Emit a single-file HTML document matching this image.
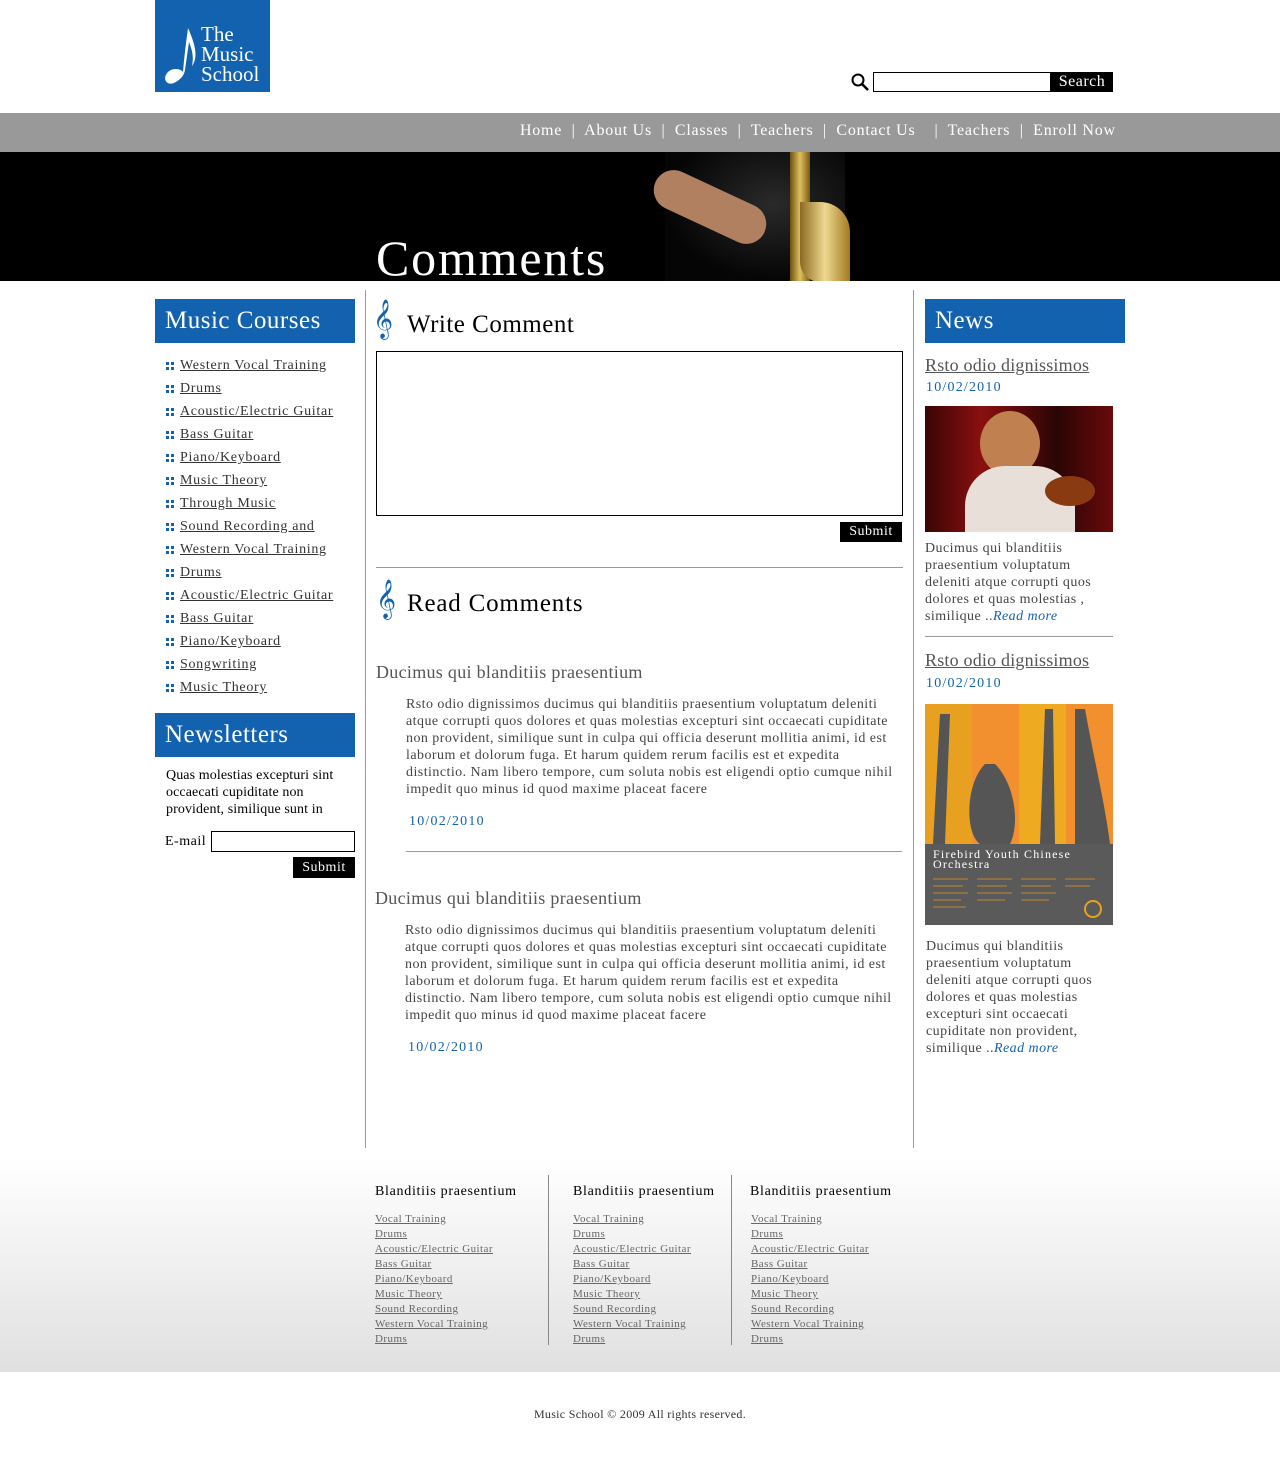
<!DOCTYPE html>
<html><head><meta charset="utf-8"><style>
*{margin:0;padding:0;box-sizing:border-box}
body{width:1280px;height:1458px;position:relative;background:#fff;font-family:"Liberation Serif",serif;color:#333;overflow:hidden;letter-spacing:.5px}
.a{position:absolute}
a{color:#333;text-decoration:underline}
.blue{background:#1362b0;color:#fff}
.hd{font-size:25px;padding-left:10px;line-height:44px;height:44px;width:200px}
ul.c{list-style:none}
ul.c li{font-size:14px;height:23px;line-height:20px;padding-left:25px;position:relative;letter-spacing:.7px}
ul.c li:before{content:"";position:absolute;left:11px;top:6px;width:8px;height:8px;background:
linear-gradient(#fff,#fff) 3px 0/2px 8px no-repeat,linear-gradient(#fff,#fff) 0 3px/8px 2px no-repeat,#1362b0}
.p{font-size:14px;line-height:17px;color:#444;letter-spacing:.45px}
.date{color:#1362b0;font-size:14px;letter-spacing:1.2px}
.btn{background:#000;color:#fff;font-size:14px;text-align:center}
.fl a{display:block;font-size:11px;line-height:15px;color:#666;letter-spacing:.45px}
</style></head><body>
<div class="a blue" style="left:155px;top:0;width:115px;height:92px">
<svg class="a" style="left:3px;top:28px" width="45" height="60" viewBox="0 0 45 60"><path d="M30 0 C28 15 26 30 25 44 C22 40 14 40 10 44 C4 50 8 58 16 55 C22 52 26 48 27 42 L31 14 C34 22 36 28 34 38 C40 30 38 18 30 0Z" fill="#fff"/></svg>
<div class="a" style="left:46px;top:24px;font-size:21px;line-height:20px;color:#fff;letter-spacing:0">The<br>Music<br>School</div></div>
<svg class="a" style="left:850px;top:72px" width="20" height="20"><circle cx="8" cy="8" r="5.5" fill="none" stroke="#000" stroke-width="2"/><path d="M12 12 L18 18" stroke="#000" stroke-width="2.5"/></svg>
<div class="a" style="left:873px;top:72px;width:178px;height:20px;border:1px solid #000"></div>
<div class="a btn" style="left:1051px;top:72px;width:62px;height:20px;font-size:16px;line-height:20px">Search</div>
<div class="a" style="left:0;top:113px;width:1280px;height:39px;background:#999"></div>
<div class="a" style="left:520px;top:122px;color:#fff;font-size:16px;white-space:pre;letter-spacing:.75px">Home  |  About Us  |  Classes  |  Teachers  |  Contact Us    |  Teachers  |  Enroll Now</div>
<div class="a" style="left:0;top:152px;width:1280px;height:129px;background:#000;overflow:hidden">
<div class="a" style="left:665px;top:0;width:180px;height:129px;background:radial-gradient(ellipse at 60% 40%,#2a2a2a,#050505 70%)"></div>
<div class="a" style="left:650px;top:35px;width:120px;height:40px;background:#b08060;border-radius:20px;transform:rotate(25deg)"></div>
<div class="a" style="left:790px;top:0;width:20px;height:129px;background:linear-gradient(90deg,#6a5010,#e0c060,#7a5a10)"></div>
<div class="a" style="left:800px;top:50px;width:50px;height:80px;border-radius:0 30px 0 20px;background:linear-gradient(90deg,#8a6a20,#f0d890,#a07a20)"></div>
<div class="a" style="left:376px;top:78px;font-size:50px;color:#fff;line-height:56px;letter-spacing:1.8px">Comments</div></div>
<div class="a" style="left:365px;top:290px;width:1px;height:858px;background:#999"></div>
<div class="a" style="left:913px;top:290px;width:1px;height:858px;background:#999"></div>
<div class="a blue hd" style="left:155px;top:299px">Music Courses</div>
<ul class="a c" style="left:155px;top:356px">
<li><a>Western Vocal Training</a></li><li><a>Drums</a></li><li><a>Acoustic/Electric Guitar</a></li><li><a>Bass Guitar</a></li><li><a>Piano/Keyboard</a></li><li><a>Music Theory</a></li><li><a>Through Music</a></li><li><a>Sound Recording and </a></li><li><a>Western Vocal Training</a></li><li><a>Drums</a></li><li><a>Acoustic/Electric Guitar</a></li><li><a>Bass Guitar</a></li><li><a>Piano/Keyboard</a></li><li><a>Songwriting</a></li><li><a>Music Theory</a></li></ul>
<div class="a blue hd" style="left:155px;top:713px">Newsletters</div>
<div class="a" style="left:166px;top:767px;font-size:14px;line-height:17px;color:#000;width:190px;letter-spacing:.1px">Quas molestias excepturi sint occaecati cupiditate non provident, similique sunt in</div>
<div class="a" style="left:165px;top:834px;font-size:14px;color:#000">E-mail</div>
<div class="a" style="left:211px;top:831px;width:144px;height:21px;border:1px solid #000"></div>
<div class="a btn" style="left:293px;top:857px;width:62px;height:21px;line-height:21px">Submit</div>
<div class="a" style="left:373px;top:300px;font-size:34px;color:#1362b0;line-height:40px">𝄞</div>
<div class="a" style="left:407px;top:311px;font-size:25px;color:#000">Write Comment</div>
<div class="a" style="left:376px;top:351px;width:527px;height:165px;border:1px solid #000"></div>
<div class="a btn" style="left:840px;top:522px;width:62px;height:20px;line-height:20px">Submit</div>
<div class="a" style="left:376px;top:567px;width:527px;height:1px;background:#999"></div>
<div class="a" style="left:376px;top:580px;font-size:34px;color:#1362b0;line-height:40px">𝄞</div>
<div class="a" style="left:407px;top:590px;font-size:25px;color:#000;letter-spacing:.8px">Read Comments</div>
<div class="a" style="left:376px;top:662px;font-size:18px;color:#555;letter-spacing:.3px">Ducimus qui blanditiis praesentium</div>
<div class="a p" style="left:406px;top:696px;width:496px">Rsto odio dignissimos ducimus qui blanditiis praesentium voluptatum deleniti atque corrupti quos dolores et quas molestias excepturi sint occaecati cupiditate non provident, similique sunt in culpa qui officia deserunt mollitia animi, id est laborum et dolorum fuga. Et harum quidem rerum facilis est et expedita distinctio. Nam libero tempore, cum soluta nobis est eligendi optio cumque nihil impedit quo minus id quod maxime placeat facere</div>
<div class="a date" style="left:409px;top:814px">10/02/2010</div>
<div class="a" style="left:406px;top:851px;width:496px;height:1px;background:#999"></div>
<div class="a" style="left:375px;top:888px;font-size:18px;color:#555;letter-spacing:.3px">Ducimus qui blanditiis praesentium</div>
<div class="a p" style="left:405px;top:922px;width:496px">Rsto odio dignissimos ducimus qui blanditiis praesentium voluptatum deleniti atque corrupti quos dolores et quas molestias excepturi sint occaecati cupiditate non provident, similique sunt in culpa qui officia deserunt mollitia animi, id est laborum et dolorum fuga. Et harum quidem rerum facilis est et expedita distinctio. Nam libero tempore, cum soluta nobis est eligendi optio cumque nihil impedit quo minus id quod maxime placeat facere</div>
<div class="a date" style="left:408px;top:1040px">10/02/2010</div>
<div class="a blue hd" style="left:925px;top:299px">News</div>
<div class="a" style="left:925px;top:355px;font-size:18px;letter-spacing:.2px"><a style="color:#555">Rsto odio dignissimos</a></div>
<div class="a date" style="left:926px;top:380px">10/02/2010</div>
<div class="a" style="left:925px;top:406px;width:188px;height:126px;background:linear-gradient(90deg,#3a0505,#8a1010 30%,#2a0505 70%,#6a0a0a);overflow:hidden">
<div class="a" style="left:55px;top:5px;width:60px;height:65px;border-radius:50%;background:#c08050"></div>
<div class="a" style="left:40px;top:60px;width:110px;height:70px;border-radius:40px 40px 0 0;background:#e8e0d8"></div>
<div class="a" style="left:120px;top:70px;width:50px;height:30px;border-radius:50%;background:#8a3a10"></div></div>
<div class="a p" style="left:925px;top:540px;width:185px">Ducimus qui blanditiis praesentium voluptatum deleniti atque corrupti quos dolores et quas molestias , similique ..<i style="color:#1362b0">Read more</i></div>
<div class="a" style="left:925px;top:636px;width:188px;height:1px;background:#999"></div>
<div class="a" style="left:925px;top:650px;font-size:18px;letter-spacing:.2px"><a style="color:#555">Rsto odio dignissimos</a></div>
<div class="a date" style="left:926px;top:676px">10/02/2010</div>
<div class="a" style="left:925px;top:704px;width:188px;height:221px;background:linear-gradient(90deg,#e8a020 0 25%,#f29030 25% 50%,#eeaa20 50% 75%,#f29030 75%);overflow:hidden">
<svg class="a" style="left:0;top:0" width="188" height="221"><path d="M15 10 L25 10 L20 140 L8 140Z" fill="#555"/><path d="M60 60 C40 80 40 130 55 140 L85 140 C95 120 90 80 70 60Z" fill="#555"/><path d="M120 5 L128 5 L130 140 L115 140Z" fill="#555"/><path d="M150 5 L160 5 C170 60 180 100 185 140 L150 140Z" fill="#555"/><rect x="0" y="140" width="188" height="81" fill="#5a5a5a"/>
<g stroke="#d08a30" stroke-width="1.5" opacity=".6"><path d="M8 175h35M8 182h30M8 189h35M8 196h28M8 203h33M52 175h35M52 182h30M52 189h35M52 196h28M96 175h35M96 182h30M96 189h35M96 196h28M140 175h30M140 182h25"/></g>
<circle cx="168" cy="205" r="8" fill="none" stroke="#e8a020" stroke-width="2"/></svg>
<div class="a" style="left:8px;top:145px;color:#fff;font-size:12px;line-height:10px;letter-spacing:1.2px">Firebird Youth Chinese<br>Orchestra</div></div>
<div class="a p" style="left:926px;top:938px;width:185px">Ducimus qui blanditiis praesentium voluptatum deleniti atque corrupti quos dolores et quas molestias excepturi sint occaecati cupiditate non provident, similique ..<i style="color:#1362b0">Read more</i></div>
<div class="a" style="left:0;top:1158px;width:1280px;height:214px;background:linear-gradient(#fff,#e0e0e0)"></div>
<div class="a" style="left:548px;top:1175px;width:1px;height:170px;background:#888"></div>
<div class="a" style="left:731px;top:1175px;width:1px;height:170px;background:#888"></div>
<div class="a" style="left:375px;top:1184px;font-size:14px;color:#000;letter-spacing:.7px">Blanditiis praesentium</div>
<div class="a" style="left:573px;top:1184px;font-size:14px;color:#000;letter-spacing:.7px">Blanditiis praesentium</div>
<div class="a" style="left:750px;top:1184px;font-size:14px;color:#000;letter-spacing:.7px">Blanditiis praesentium</div>
<div class="a fl" style="left:375px;top:1212px"><a>Vocal Training</a><a>Drums</a><a>Acoustic/Electric Guitar</a><a>Bass Guitar</a><a>Piano/Keyboard</a><a>Music Theory</a><a>Sound Recording </a><a>Western Vocal Training</a><a>Drums</a></div>
<div class="a fl" style="left:573px;top:1212px"><a>Vocal Training</a><a>Drums</a><a>Acoustic/Electric Guitar</a><a>Bass Guitar</a><a>Piano/Keyboard</a><a>Music Theory</a><a>Sound Recording </a><a>Western Vocal Training</a><a>Drums</a></div>
<div class="a fl" style="left:751px;top:1212px"><a>Vocal Training</a><a>Drums</a><a>Acoustic/Electric Guitar</a><a>Bass Guitar</a><a>Piano/Keyboard</a><a>Music Theory</a><a>Sound Recording </a><a>Western Vocal Training</a><a>Drums</a></div>
<div class="a" style="left:0;top:1407px;width:1280px;text-align:center;font-size:12px;color:#333;letter-spacing:.3px">Music School © 2009 All rights reserved.</div>
</body></html>
